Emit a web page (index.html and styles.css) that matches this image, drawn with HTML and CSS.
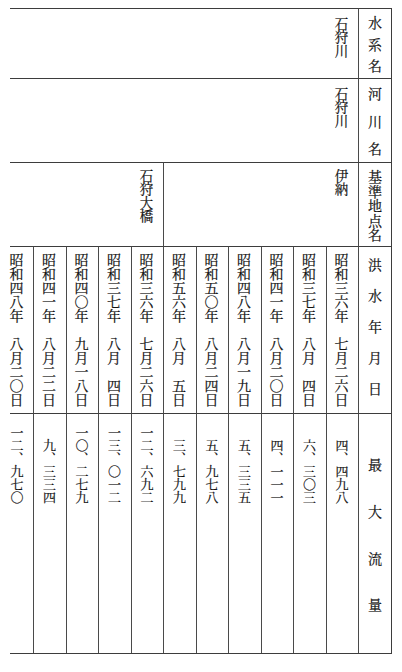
FILE: index.html
```html
<!DOCTYPE html>
<html lang="ja">
<head>
<meta charset="utf-8">
<title>洪水年月日と最大流量</title>
<link rel="stylesheet" href="styles.css">
</head>
<body>
<div class="table">
  <div class="cell c1 span-all"><div class="v name pad-r1">石狩川</div></div>
  <div class="cell head"><div class="v label l-suikei">水系名</div></div>

  <div class="cell c1 span-all"><div class="v name pad-r2">石狩川</div></div>
  <div class="cell head"><div class="v label l-kasen">河川名</div></div>

  <div class="cell c1 span-left"><div class="v name pad-r3">石狩大橋</div></div>
  <div class="cell span-right"><div class="v name pad-r3">伊納</div></div>
  <div class="cell head"><div class="v label l-kijun">基準地点名</div></div>

  <div class="cell c1 date"><div class="v dt">昭和四八年　八月二〇日</div></div>
  <div class="cell date"><div class="v dt">昭和四一年　八月二二日</div></div>
  <div class="cell date"><div class="v dt">昭和四〇年　九月一八日</div></div>
  <div class="cell date"><div class="v dt">昭和三七年　八月　四日</div></div>
  <div class="cell date"><div class="v dt">昭和三六年　七月二六日</div></div>
  <div class="cell date"><div class="v dt">昭和五六年　八月　五日</div></div>
  <div class="cell date"><div class="v dt">昭和五〇年　八月二四日</div></div>
  <div class="cell date"><div class="v dt">昭和四八年　八月一九日</div></div>
  <div class="cell date"><div class="v dt">昭和四一年　八月二〇日</div></div>
  <div class="cell date"><div class="v dt">昭和三七年　八月　四日</div></div>
  <div class="cell date"><div class="v dt">昭和三六年　七月二六日</div></div>
  <div class="cell head"><div class="v label l-kozui">洪水年月日</div></div>

  <div class="cell c1 val"><div class="v num">一二、九七〇</div></div>
  <div class="cell val"><div class="v num">九、三三四</div></div>
  <div class="cell val"><div class="v num">一〇、二七九</div></div>
  <div class="cell val"><div class="v num">一三、〇一二</div></div>
  <div class="cell val"><div class="v num">一二、六九二</div></div>
  <div class="cell val"><div class="v num">三、七九九</div></div>
  <div class="cell val"><div class="v num">五、九七八</div></div>
  <div class="cell val"><div class="v num">五、三三五</div></div>
  <div class="cell val"><div class="v num">四、一一一</div></div>
  <div class="cell val"><div class="v num">六、三〇三</div></div>
  <div class="cell val"><div class="v num">四、四九八</div></div>
  <div class="cell head"><div class="v label l-max">最大流量</div></div>
</div>
</body>
</html>
```

FILE: styles.css
```css
html, body {
  margin: 0;
  padding: 0;
  background: #ffffff;
}

body {
  font-family: "Noto Serif CJK JP", "Noto Sans CJK JP", serif;
  color: #111111;
}

.table {
  margin: 8px 0 0 10px;
  width: 382px;
  display: grid;
  grid-template-columns: 23px repeat(10, 32.5px) 33px;
  grid-template-rows: 70px 84px 84px 167px 240px;
  border-right: 1px solid #3d3d3d;
  border-bottom: 1px solid #3d3d3d;
  box-sizing: border-box;
  height: 646px;
}

.cell {
  box-sizing: border-box;
  border-top: 1px solid #3d3d3d;
  border-left: 1px solid #4a4a4a;
  display: flex;
  justify-content: flex-end;
  align-items: flex-start;
  padding-right: 9.5px;
}

.cell.c1 {
  border-left: none;
}

.span-all {
  grid-column: 1 / 12;
}

.span-left {
  grid-column: 1 / 6;
}

.span-right {
  grid-column: 6 / 12;
}

.head {
  grid-column: 12 / 13;
  justify-content: center;
  padding-right: 0;
}

.v {
  writing-mode: vertical-rl;
  text-orientation: mixed;
  white-space: nowrap;
  -webkit-text-stroke: 0.2px #111111;
}

.name {
  font-size: 13.5px;
  line-height: 14px;
}

.pad-r1 { margin-top: 8px; }
.pad-r2 { margin-top: 8px; }
.pad-r3 { margin-top: 6px; }

.dt {
  font-size: 14px;
  line-height: 14px;
  margin-top: 6px;
}

.num {
  font-size: 13px;
  line-height: 14px;
  height: 90px;
  text-align: end;
}

.label {
  font-size: 14px;
  line-height: 14px;
  text-align: justify;
  text-align-last: justify;
}

.l-suikei { margin-top: 7px; height: 57px; }
.l-kasen { margin-top: 8px; height: 69px; }
.l-kijun { margin-top: 7px; height: 72px; }
.l-kozui { margin-top: 11px; height: 138px; }
.l-max { margin-top: 44px; height: 154px; }
```
